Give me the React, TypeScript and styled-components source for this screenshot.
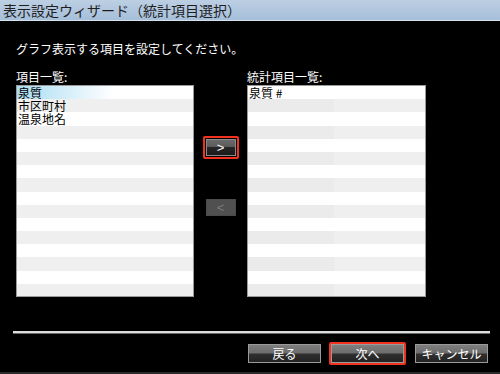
import React from 'react';
import styled, { createGlobalStyle } from 'styled-components';

const GlobalStyle = createGlobalStyle`
  body {
    margin: 0;
    background: #000;
    font-family: "Noto Sans CJK JP", "Noto Sans", sans-serif;
  }
`;

const ROWS = 16;

const Window = styled.div`
  width: 500px;
  height: 374px;
  box-sizing: border-box;
  background: #000;
  border-bottom: 2px solid #2a2a2a;
  display: flex;
  flex-direction: column;
`;

const TitleBar = styled.div`
  height: 21px;
  box-sizing: border-box;
  background: linear-gradient(to bottom, #bccfe3, #a6bfda);
  border-bottom: 1px solid #d6e2ee;
  color: #1e1e1e;
  font-size: 14px;
  line-height: 20px;
  padding-left: 3px;
  white-space: nowrap;
`;

const Body = styled.div`
  flex: 1;
  display: flex;
  flex-direction: column;
  padding-left: 16px;
  color: #fff;
`;

const Instruction = styled.div`
  margin-top: 20px;
  font-size: 12px;
  line-height: 16px;
`;

const Panes = styled.div`
  margin-top: 12px;
  display: flex;
`;

const Column = styled.div<{ $width: number }>`
  width: ${(p) => p.$width}px;
  display: flex;
  flex-direction: column;
`;

const Label = styled.div`
  font-size: 12px;
  line-height: 16px;
`;

const ListBox = styled.div`
  height: 212px;
  box-sizing: border-box;
  border: 1px solid #9a9a9a;
  background: #fff;
  overflow: hidden;
`;

const Row = styled.div<{ $odd: boolean; $selected?: boolean }>`
  height: 13.2px;
  display: flex;
  font-size: 12px;
  line-height: 13.2px;
  color: #000;
  overflow: hidden;
  background: ${(p) =>
    p.$selected
      ? 'linear-gradient(to right, #a9dcf3, #ffffff 55%)'
      : p.$odd
      ? '#efefef'
      : '#fff'};
`;

const Cell = styled.div<{ $width?: number; $shade?: boolean }>`
  ${(p) => (p.$width ? `width: ${p.$width}px;` : 'flex: 1;')}
  height: 13.2px;
  padding-left: 1px;
  white-space: nowrap;
  overflow: hidden;
  background: ${(p) => (p.$shade ? '#ebebeb' : 'transparent')};
`;

const Middle = styled.div`
  width: 53px;
  display: flex;
  flex-direction: column;
  align-items: center;
  padding-top: 67px;
`;

const Highlight = styled.div`
  border: 2px solid #f0321e;
  border-radius: 2px;
  padding: 1px;
  display: flex;
`;

const MoveButton = styled.button<{ $disabled?: boolean }>`
  width: 30px;
  height: 17px;
  padding: 0;
  margin: 0;
  box-sizing: border-box;
  border: 1px solid ${(p) => (p.$disabled ? '#4a4a4a' : '#8a8a8a')};
  background: ${(p) =>
    p.$disabled
      ? '#505050'
      : 'linear-gradient(to bottom, #6a6a6a 0%, #5a5a5a 45%, #262626 50%, #1a1a1a 100%)'};
  color: ${(p) => (p.$disabled ? '#7a7a7a' : '#fff')};
  font-family: "Liberation Sans", sans-serif;
  font-size: 13px;
  line-height: 15px;
`;

const Spacer = styled.div<{ $h: number }>`
  height: ${(p) => p.$h}px;
`;

const Separator = styled.div`
  margin-top: 34px;
  margin-left: -3px;
  width: 477px;
  height: 2px;
  background: #dcdcdc;
  border-bottom: 1px solid #6a6a6a;
`;

const Footer = styled.div`
  margin-top: 8px;
  display: flex;
  align-items: center;
  padding-left: 232px;
`;

const FooterButton = styled.button`
  width: 73px;
  height: 19px;
  padding: 0;
  margin: 0;
  box-sizing: border-box;
  border: 1px solid #9a9a9a;
  background: linear-gradient(to bottom, #7e7e7e 0%, #6c6c6c 48%, #303030 52%, #222 100%);
  color: #fff;
  font-family: "Noto Sans CJK JP", sans-serif;
  font-size: 12px;
  line-height: 17px;
`;

const FooterHighlight = styled(Highlight)`
  padding: 0;
  margin: 0 9px 0 8px;
`;

const leftItems = ['泉質', '市区町村', '温泉地名'];
const rightItems = ['泉質 #'];

const App: React.FC = () => {
  const rows = Array.from({ length: ROWS }, (_, i) => i);
  return (
    <>
      <GlobalStyle />
      <Window>
        <TitleBar>表示設定ウィザード（統計項目選択）</TitleBar>
        <Body>
          <Instruction>グラフ表示する項目を設定してください。</Instruction>
          <Panes>
            <Column $width={178}>
              <Label>項目一覧:</Label>
              <ListBox>
                {rows.map((i) => (
                  <Row key={i} $odd={i % 2 === 1} $selected={i === 0}>
                    <Cell>{leftItems[i] ?? ''}</Cell>
                  </Row>
                ))}
              </ListBox>
            </Column>
            <Middle>
              <Highlight>
                <MoveButton>&gt;</MoveButton>
              </Highlight>
              <Spacer $h={40} />
              <MoveButton $disabled>&lt;</MoveButton>
            </Middle>
            <Column $width={179}>
              <Label>統計項目一覧:</Label>
              <ListBox>
                {rows.map((i) => (
                  <Row key={i} $odd={i % 2 === 1}>
                    <Cell $width={85} $shade={i % 2 === 1}>
                      {rightItems[i] ?? ''}
                    </Cell>
                    <Cell />
                  </Row>
                ))}
              </ListBox>
            </Column>
          </Panes>
          <Separator />
          <Footer>
            <FooterButton>戻る</FooterButton>
            <FooterHighlight>
              <FooterButton>次へ</FooterButton>
            </FooterHighlight>
            <FooterButton>キャンセル</FooterButton>
          </Footer>
        </Body>
      </Window>
    </>
  );
};

export default App;
